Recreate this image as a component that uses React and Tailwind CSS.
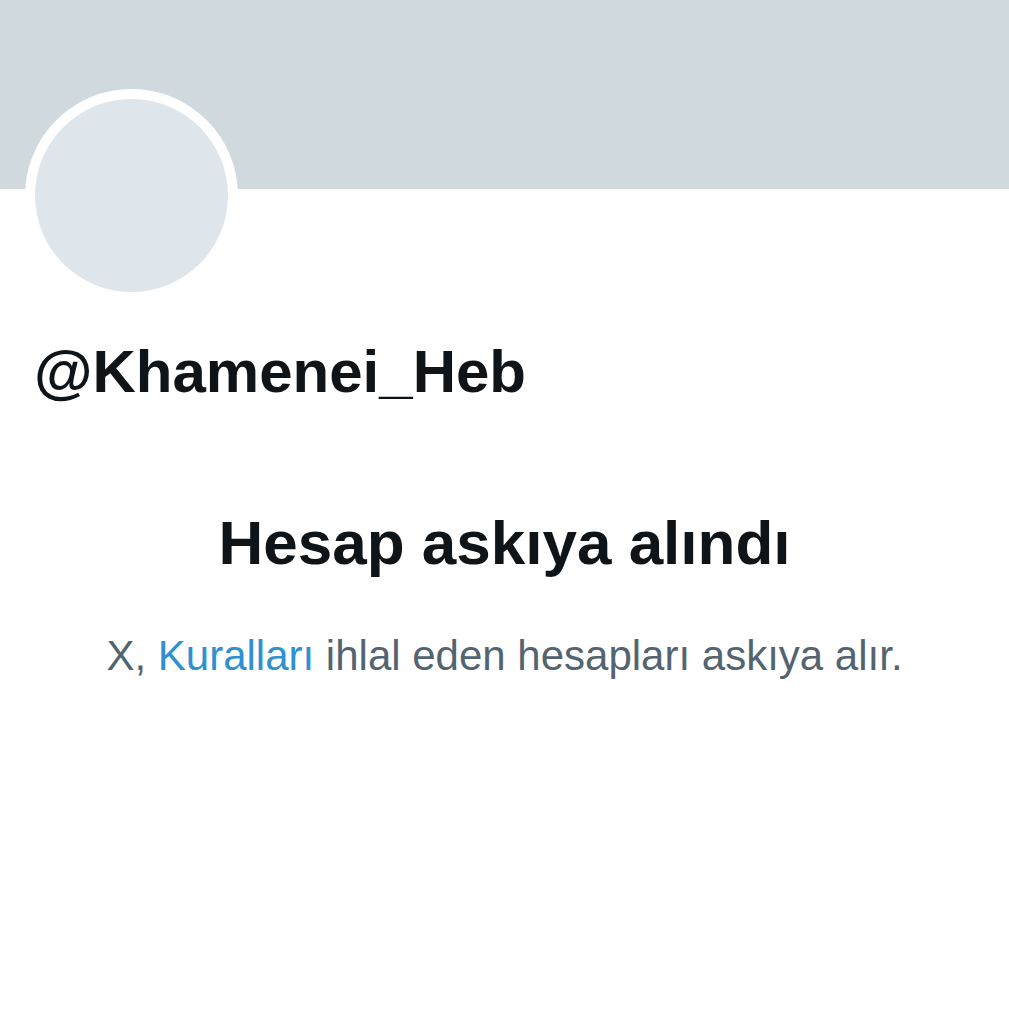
export default function App() {
  return (
    <div className="min-h-[1024px] w-full bg-white font-['Liberation_Sans',Arial,sans-serif]">
      {/* Banner */}
      <div className="h-[189px] bg-[#cfd9de]" />

      {/* Avatar */}
      <div className="-mt-[100px] pl-[25px]">
        <div className="flex h-[213px] w-[213px] items-center justify-center rounded-full bg-white">
          <div className="h-[193px] w-[193px] rounded-full bg-[#dfe6eb]" />
        </div>
      </div>

      {/* Handle */}
      <h2 className="mt-[35px] pl-[34px] text-[60px] font-bold leading-[70px] text-[#0f1419]">
        @Khamenei_Heb
      </h2>

      {/* Suspended notice */}
      <div className="mt-[99px] text-center">
        <h1 className="text-[62px] font-bold leading-[74px] text-[#0f1419]">
          Hesap askıya alındı
        </h1>
        <p className="mt-[51px] text-[42px] leading-[50px] text-[#536471]">
          X, <span className="text-[#2f91cf]">Kuralları</span> ihlal eden hesapları askıya alır.
        </p>
      </div>
    </div>
  );
}
